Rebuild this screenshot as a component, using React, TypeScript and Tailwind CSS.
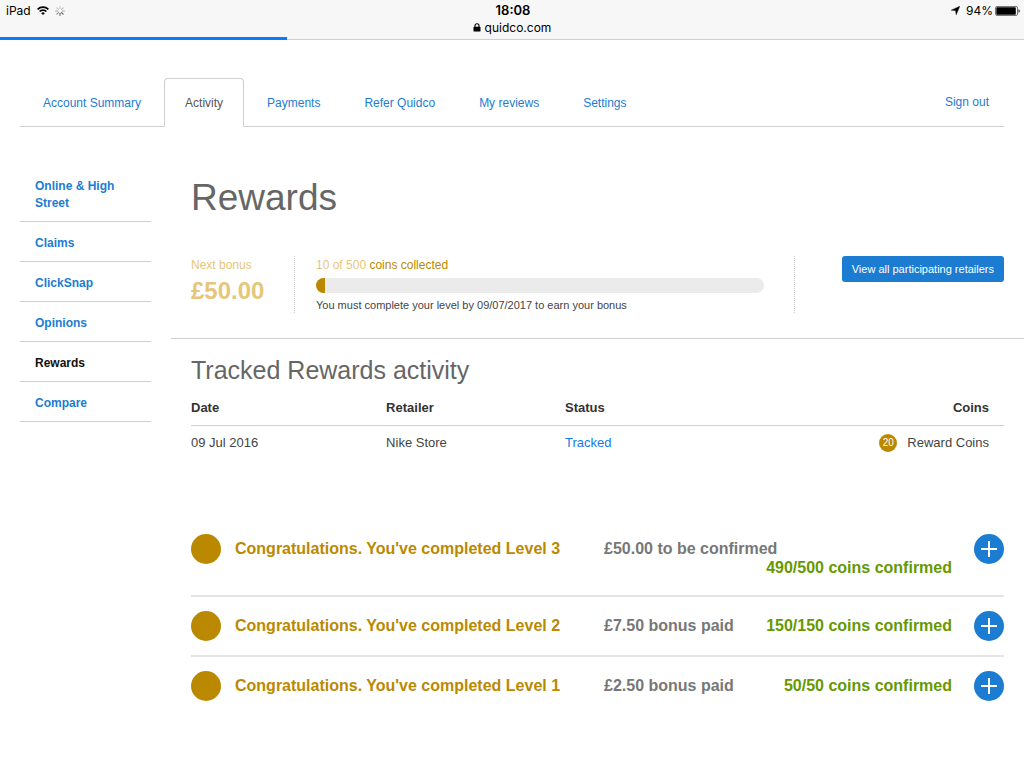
import React from "react";

const tabs = ["Account Summary", "Activity", "Payments", "Refer Quidco", "My reviews", "Settings"];
const sections = ["Online & High Street", "Claims", "ClickSnap", "Opinions", "Rewards", "Compare"];
const levels = [
  { level: 3, bonus: "£50.00 to be confirmed", coins: "490/500 coins confirmed" },
  { level: 2, bonus: "£7.50 bonus paid", coins: "150/150 coins confirmed" },
  { level: 1, bonus: "£2.50 bonus paid", coins: "50/50 coins confirmed" },
];

function WifiIcon() {
  return (
    <svg width="12" height="9" viewBox="0 0 12 9" fill="none" stroke="#000" strokeWidth="1.7" aria-hidden="true">
      <path d="M0.6 3.3a7.7 7.7 0 0 1 10.8 0" />
      <path d="M2.6 5.5a4.8 4.8 0 0 1 6.8 0" />
      <path d="M6 9 4.2 7.2a2.5 2.5 0 0 1 3.6 0z" fill="#000" stroke="none" />
    </svg>
  );
}

const spokes = [0.25, 0.35, 0.45, 0.9, 0.75, 0.6, 0.5, 0.3];

function Spinner() {
  return (
    <svg width="10" height="10" viewBox="0 0 10 10" stroke="#444" strokeWidth="1.1" strokeLinecap="round" aria-hidden="true">
      {spokes.map((opacity, i) => (
        <path key={i} d="M5 0.6v2.2" opacity={opacity} transform={`rotate(${i * 45} 5 5)`} />
      ))}
    </svg>
  );
}

function StatusBar() {
  return (
    <header className="border-b border-[#cfcfcf] bg-[#f7f7f7] font-['Inter',sans-serif] text-xs text-black">
      <div className="grid h-[21px] grid-cols-3 items-center pr-1 pl-1.5">
        <div className="flex items-center gap-1.5">
          <span>iPad</span>
          <WifiIcon />
          <Spinner />
        </div>
        <div className="text-center text-[13px] font-semibold">18:08</div>
        <div className="flex items-center justify-end">
          <svg width="9" height="9" viewBox="0 0 9 9" aria-hidden="true">
            <path d="M8.8 0.2 5.2 8.8 4.5 4.6 0.2 4.2z" fill="#000" stroke="#000" strokeWidth="0.4" />
          </svg>
          <span className="pl-1.5 pr-0.5">94%</span>
          <svg width="25" height="10" viewBox="0 0 25 10" aria-hidden="true">
            <rect x="0.5" y="0.5" width="22" height="9" rx="1.5" fill="none" stroke="#777" />
            <rect x="1.3" y="1.3" width="19.5" height="7.4" rx="0.8" fill="#000" />
            <path d="M23.5 3.2c1 .4 1.2 1 1.2 1.8s-.2 1.4-1.2 1.8z" fill="#222" />
          </svg>
        </div>
      </div>
      <div className="flex h-4 items-start justify-center gap-1 leading-[14px]">
        <svg className="mt-0.5" width="8" height="9" viewBox="0 0 8 9" aria-hidden="true">
          <path d="M2 4.2V2.8a2 2 0 0 1 4 0v1.4" fill="none" stroke="#000" strokeWidth="1.1" />
          <rect x="0.5" y="3.8" width="7" height="4.8" rx="0.7" fill="#000" />
        </svg>
        <span>quidco.com</span>
      </div>
      <div className="h-0.5">
        <div className="h-[3px] w-[28%] bg-[#0a7aff]" />
      </div>
    </header>
  );
}

function Tabs() {
  return (
    <nav className="mx-5 flex items-end justify-between border-b border-[#cfcfcf] pt-[38px] text-xs leading-[18px]" aria-label="Account">
      <ul className="-mb-px flex gap-0.5 pl-0.5">
        {tabs.map((tab) => (
          <li key={tab}>
            <a
              href="#"
              className={
                tab === "Activity"
                  ? "block rounded-t border border-[#cfcfcf] border-b-white bg-white px-5 pt-[15px] pb-[14px] text-[#555]"
                  : "block border border-transparent px-5 pt-[15px] pb-[14px] text-[#1c7cd2]"
              }
            >
              {tab}
            </a>
          </li>
        ))}
      </ul>
      <a href="#" className="pr-[15px] pb-[15px] text-[#1c7cd2]">Sign out</a>
    </nav>
  );
}

function Sidebar() {
  return (
    <nav className="w-[131px] shrink-0 text-xs leading-[17px] font-bold" aria-label="Activity">
      <ul>
        {sections.map((section) => (
          <li key={section} className="border-b border-[#cfcfcf]">
            <a
              href="#"
              className={
                section === "Rewards"
                  ? "block px-[15px] pt-[13px] pb-[9px] text-[#111]"
                  : "block px-[15px] pt-[13px] pb-[9px] text-[#1c7cd2]"
              }
            >
              {section}
            </a>
          </li>
        ))}
      </ul>
    </nav>
  );
}

function BonusSummary() {
  const collected = 10;
  const target = 500;
  return (
    <section className="flex border-b border-[#cfcfcf] pr-5 pb-[25px] pl-5">
      <div className="w-[104px] shrink-0 border-r border-dotted border-[#cfcfcf] text-[#e6c67a]">
        <p className="text-xs leading-[18px]">Next bonus</p>
        <p className="pt-0.5 text-2xl leading-[30px] font-bold">£50.00</p>
      </div>
      <div className="flex-1 border-r border-dotted border-[#cfcfcf] pr-[30px] pl-[21px]">
        <p className="text-xs leading-[18px] text-[#bb8900]">
          <span className="text-[#e6c67a]">{collected} of {target}</span> coins collected
        </p>
        <div className="mt-1 h-[15px] overflow-hidden rounded-full bg-[#ebebeb]">
          <div className="h-full bg-[#bb8900]" style={{ width: `${(collected / target) * 100}%` }} />
        </div>
        <p className="pt-1 text-[11px] leading-4 text-[#444]">
          You must complete your level by 09/07/2017 to earn your bonus
        </p>
      </div>
      <div className="pl-[47px]">
        <button type="button" className="h-[26px] rounded-[3px] bg-[#1c7cd2] px-[10px] text-[11px] whitespace-nowrap text-white">
          View all participating retailers
        </button>
      </div>
    </section>
  );
}

function TrackedActivity() {
  return (
    <section className="pt-4 pr-5 pl-5">
      <h2 className="text-[25px] leading-[30px] text-[#666]">Tracked Rewards activity</h2>
      <table className="mt-1.5 w-full table-fixed text-left text-[13px] leading-[18px] text-[#444]">
        <thead>
          <tr className="border-b border-[#cfcfcf] text-[#333]">
            <th className="w-[24%] pt-2 pb-2">Date</th>
            <th className="w-[22%] pt-2 pb-2">Retailer</th>
            <th className="w-[22%] pt-2 pb-2">Status</th>
            <th className="pt-2 pr-[15px] pb-2 text-right">Coins</th>
          </tr>
        </thead>
        <tbody>
          <tr>
            <td className="py-2">09 Jul 2016</td>
            <td className="py-2">Nike Store</td>
            <td className="py-2"><a href="#" className="text-[#1779e6]">Tracked</a></td>
            <td className="py-2 pr-[15px]">
              <div className="flex items-center justify-end gap-[10px]">
                <span className="flex size-[18px] items-center justify-center rounded-full bg-[#bb8900] text-[10px] text-white">20</span>
                Reward Coins
              </div>
            </td>
          </tr>
        </tbody>
      </table>
    </section>
  );
}

function Levels() {
  return (
    <ul className="mt-[60px] pr-5 pl-5 text-base leading-[19px] font-bold">
      {levels.map(({ level, bonus, coins }) => (
        <li
          key={level}
          className="grid grid-cols-[44px_369fr_348fr_52px] border-b-2 border-[#e5e5e5] py-[14px] last:border-b-0"
        >
          <span className="size-[30px] rounded-full bg-[#bb8900]" />
          <h3 className="pt-[5px] pb-1 text-[#bb8900]">Congratulations. You've completed Level {level}</h3>
          <div className="flex flex-wrap pt-[5px] pb-1">
            <span className="text-[#777]">{bonus}</span>
            <span className="ml-auto text-[#690]">{coins}</span>
          </div>
          <button
            type="button"
            aria-label={`Show level ${level}`}
            className="flex size-[30px] items-center justify-center justify-self-end rounded-full bg-[#1c7cd2]"
          >
            <svg width="16" height="16" viewBox="0 0 16 16" stroke="#fff" strokeWidth="2" aria-hidden="true">
              <path d="M0 8h16M8 0v16" />
            </svg>
          </button>
        </li>
      ))}
    </ul>
  );
}

export default function App() {
  return (
    <div className="min-h-screen bg-white font-['Liberation_Sans',Arial,sans-serif]">
      <StatusBar />
      <Tabs />
      <div className="flex gap-5 pt-[38px] pl-5">
        <Sidebar />
        <main className="min-w-0 flex-1 pt-[9px]">
          <h1 className="px-5 pb-[34px] text-[37px] leading-[48px] text-[#666]">Rewards</h1>
          <BonusSummary />
          <TrackedActivity />
          <Levels />
        </main>
      </div>
    </div>
  );
}
